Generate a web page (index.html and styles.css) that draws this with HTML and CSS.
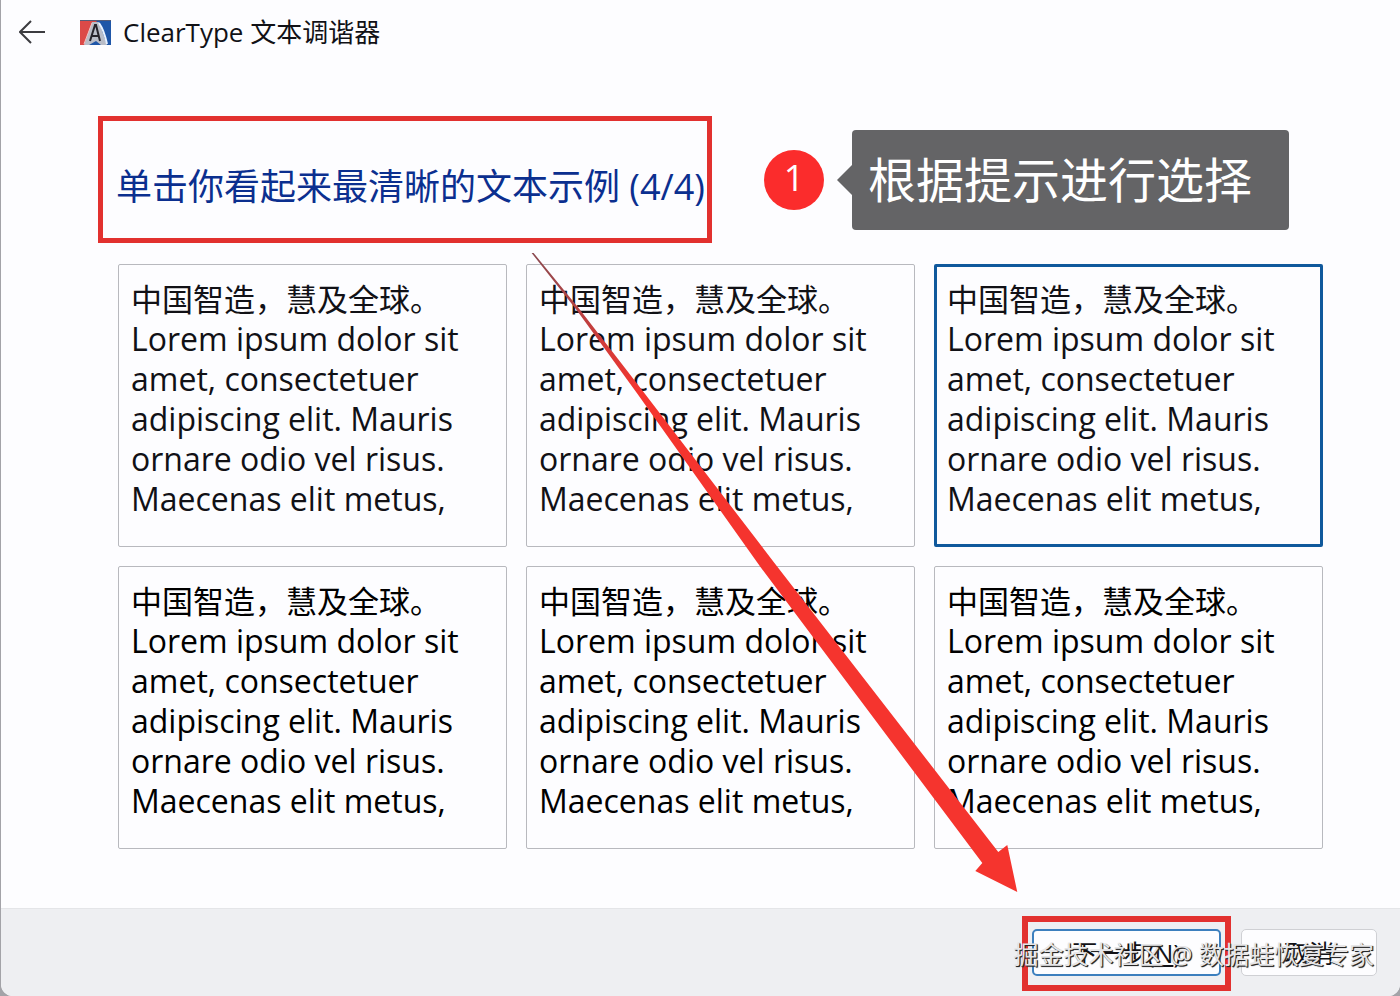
FILE: index.html
```
<!DOCTYPE html>
<html lang="zh-CN">
	<head>
		<meta charset="utf-8">
		<title>ClearType 文本调谐器</title>
		<link rel="stylesheet" href="styles.css">
	</head>
	<body>
		<div class="window">
			<header class="titlebar">
				<button class="back" aria-label="返回">
					<svg width="26" height="24" viewBox="0 0 26 24" fill="none" stroke="#3c3c40" stroke-width="2">
						<path d="M26 12H2M12 1L1 12L12 23"/>
					</svg>
				</button>
				<svg class="logo" width="31" height="25" viewBox="0 0 31 25">
					<rect width="31" height="25" fill="#1f56a8"/>
					<path d="M0 0H17L9 25H0Z" fill="#dc4a48"/>
					<path d="M0 0H31V1H0Z" fill="#555c78"/>
					<path d="M4 25L12 2H19L27 25H21L16 21L9 25Z" fill="#b9bdc8"/>
					<path d="M19 3Q24 10 27 24" fill="none" stroke="#e9f2ff" stroke-width="2"/>
					<path d="M4 24L12 3" stroke="#f0c4c4" stroke-width="1"/>
					<path d="M10 21L15 5H16L20 21M12 16H19" fill="none" stroke="#26242c" stroke-width="2"/>
				</svg>
				<h1>ClearType 文本调谐器</h1>
			</header>
			<main>
				<div class="prompt">
					<h2>单击你看起来最清晰的文本示例 (4/4)</h2>
					<span class="step">1</span>
					<div class="tip">根据提示进行选择</div>
				</div>
				<div class="samples">
					<button class="sample"><span class="zh">中国智造，慧及全球。</span><br>Lorem ipsum dolor sit amet, consectetuer adipiscing elit. Mauris ornare odio vel risus. Maecenas elit metus,</button>
					<button class="sample"><span class="zh">中国智造，慧及全球。</span><br>Lorem ipsum dolor sit amet, consectetuer adipiscing elit. Mauris ornare odio vel risus. Maecenas elit metus,</button>
					<button class="sample selected"><span class="zh">中国智造，慧及全球。</span><br>Lorem ipsum dolor sit amet, consectetuer adipiscing elit. Mauris ornare odio vel risus. Maecenas elit metus,</button>
					<button class="sample dark"><span class="zh">中国智造，慧及全球。</span><br>Lorem ipsum dolor sit amet, consectetuer adipiscing elit. Mauris ornare odio vel risus. Maecenas elit metus,</button>
					<button class="sample dark"><span class="zh">中国智造，慧及全球。</span><br>Lorem ipsum dolor sit amet, consectetuer adipiscing elit. Mauris ornare odio vel risus. Maecenas elit metus,</button>
					<button class="sample dark"><span class="zh">中国智造，慧及全球。</span><br>Lorem ipsum dolor sit amet, consectetuer adipiscing elit. Mauris ornare odio vel risus. Maecenas elit metus,</button>
				</div>
			</main>
			<footer>
				<div class="mark">
					<button class="btn primary">下一步(<u>N</u>)</button>
				</div>
				<button class="btn">取消</button>
				<div class="watermark">掘金技术社区 @ 数据蛙恢复专家</div>
			</footer>
			<svg class="arrow" viewBox="0 0 1400 996" preserveAspectRatio="none">
				<defs>
					<linearGradient id="fade" gradientUnits="userSpaceOnUse" x1="532" y1="253" x2="640" y2="390">
						<stop offset="0" stop-color="#8a4a50"/>
						<stop offset="1" stop-color="#f5342e"/>
					</linearGradient>
				</defs>
				<path d="M531 253L533 253L578 308L643 392L774 563L998 852L1007 845L1017 892L975 871L982 863L760 567L637 394L576 310Z" fill="url(#fade)"/>
			</svg>
		</div>
	</body>
</html>
```
FILE: styles.css
```
* {
	box-sizing: border-box;
}
body {
	margin: 0;
	background: #a3a3a8;
	font-family: "Open Sans", "Noto Sans CJK SC", sans-serif;
	color: #111116;
}
button {
	font-family: inherit;
	color: inherit;
	cursor: pointer;
}
h1, h2 {
	margin: 0;
	font-weight: 400;
}
.window {
	position: relative;
	display: flex;
	flex-direction: column;
	min-height: 100vh;
	margin-left: 1px;
	background: #fdfdff;
	border-radius: 0 0 12px 12px;
	overflow: hidden;
}
.titlebar {
	display: flex;
	align-items: center;
	height: 64px;
	padding-left: 18px;
}
.back {
	display: flex;
	padding: 0;
	margin-right: 35px;
	border: 0;
	background: none;
}
.logo {
	margin-right: 12px;
}
h1 {
	font-size: 26px;
	line-height: 36px;
}
main {
	flex: 1;
	padding: 52px 77px 58px 97px;
}
.prompt {
	display: flex;
	align-items: center;
}
h2 {
	height: 127px;
	padding: 7px 0 0 13px;
	width: 614px;
	border: 5px solid #e2312f;
	font-size: 36px;
	line-height: 117px;
	white-space: nowrap;
	color: #0b2f8f;
}
.step {
	width: 60px;
	height: 60px;
	margin-left: 52px;
	border-radius: 50%;
	background: #fb2c2c;
	color: #fff;
	font-size: 36px;
	line-height: 56px;
	text-align: center;
}
.tip {
	position: relative;
	margin-left: 28px;
	padding: 0 37px 0 16px;
	border-radius: 4px;
	background: #646466;
	color: #fff;
	font-size: 48px;
	line-height: 100px;
	white-space: nowrap;
}
.tip::before {
	content: "";
	position: absolute;
	left: -15px;
	top: 35px;
	border: 15px solid transparent;
	border-left: 0;
	border-right-color: #646466;
}
.samples {
	display: grid;
	grid-template-columns: repeat(3, 1fr);
	gap: 19px;
	margin: 21px 0 0 20px;
}
.sample {
	padding: 14px 12px 27px;
	border: 1px solid #b8b9be;
	border-radius: 2px;
	background: none;
	font-size: 32px;
	line-height: 40px;
	text-align: left;
}
.sample.selected {
	padding: 12px 10px 25px;
	border: 3px solid #10599c;
}
.sample.dark {
	color: #000;
}
.zh {
	font-size: 31px;
}
footer {
	position: relative;
	display: flex;
	justify-content: flex-end;
	align-items: flex-start;
	gap: 10px;
	height: 88px;
	padding: 7px 23px 0 0;
	border-top: 1px solid #e4e5e8;
	background: #eeeff2;
}
.mark {
	padding: 7px 4px 9px;
	border: 6px solid #e2312f;
}
.btn {
	width: 136px;
	height: 47px;
	margin-top: 13px;
	border: 1px solid #cfd0d4;
	border-radius: 5px;
	background: #fdfdff;
	font-size: 25px;
	line-height: 40px;
}
.btn.primary {
	display: block;
	width: 189px;
	margin: 0;
	border: 2px solid #3c7fbe;
}
.watermark {
	position: absolute;
	right: 26px;
	bottom: 24px;
	color: #e6e6e8;
	font-size: 25px;
	line-height: 36px;
	white-space: nowrap;
	text-shadow: 1px 1px 1px #222, 1px 1px 0 #444;
	pointer-events: none;
}
.arrow {
	position: absolute;
	top: 0;
	left: 0;
	width: 100%;
	height: 100%;
	pointer-events: none;
}
```
